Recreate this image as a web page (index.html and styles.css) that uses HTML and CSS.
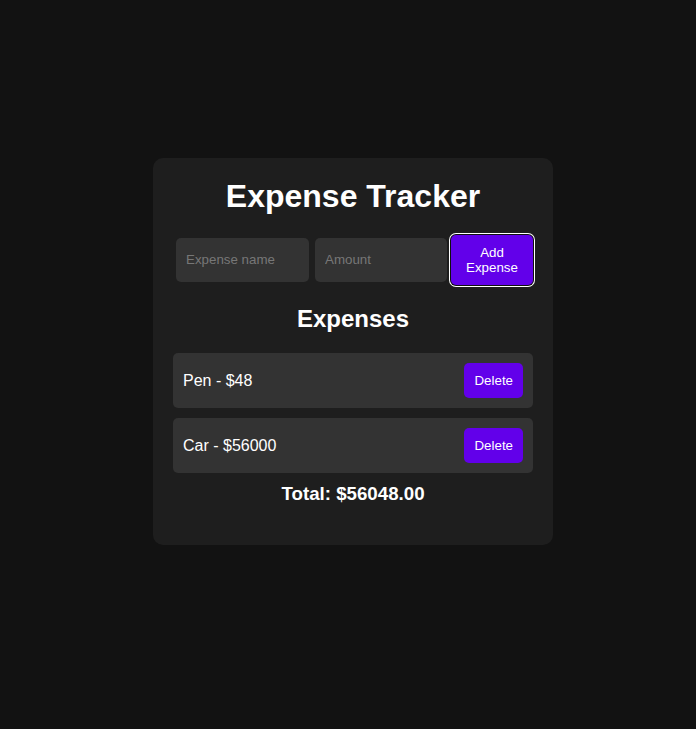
FILE: index.html
```html
<!DOCTYPE html>
<html>
<head>
<meta charset="utf-8">
<link rel="stylesheet" href="styles.css">
</head>
<body>
<div class="card">
  <h1 class="title">Expense Tracker</h1>
  <div class="form-row">
    <input class="field field-name" type="text" placeholder="Expense name">
    <input class="field field-amount" type="text" placeholder="Amount">
    <button class="add-btn">Add Expense</button>
  </div>
  <h2 class="subtitle">Expenses</h2>
  <ul class="list">
    <li class="item"><span class="item-text">Pen - $48</span><button class="del-btn">Delete</button></li>
    <li class="item"><span class="item-text">Car - $56000</span><button class="del-btn">Delete</button></li>
  </ul>
  <h3 class="total">Total: $56048.00</h3>
</div>
</body>
</html>
```

FILE: styles.css
```css
html, body {
  margin: 0;
  padding: 0;
  background: #121212;
  font-family: "Liberation Sans", Arial, sans-serif;
  color: #fff;
}
body {
  display: flex;
  justify-content: flex-start;
  padding: 158px 0 0 153px;
  height: 729px;
  box-sizing: border-box;
}
.card {
  width: 400px;
  box-sizing: border-box;
  background: #1e1e1e;
  border-radius: 10px;
  padding: 20px 20px 20px;
  align-self: flex-start;
}
.title {
  margin: 0 0 20px;
  font-size: 32px;
  font-weight: bold;
  text-align: center;
  line-height: 37px;
}
.form-row {
  display: flex;
  align-items: center;
  height: 50px;
}
.field {
  height: 44px;
  box-sizing: border-box;
  background: #333;
  border: none;
  border-radius: 5px;
  padding: 0 10px 2px;
  color: #fff;
  font-family: "Liberation Sans", Arial, sans-serif;
  font-size: 13.33px;
  outline: none;
}
.field::placeholder {
  color: #777;
}
.field-name {
  width: 133px;
  margin-left: 3px;
}
.field-amount {
  width: 132px;
  margin-left: 6px;
}
.add-btn {
  width: 82px;
  height: 50px;
  margin-left: 4px;
  background: #6200ea;
  color: #fff;
  border: none;
  border-radius: 5px;
  font-family: "Liberation Sans", Arial, sans-serif;
  font-size: 13.33px;
  line-height: 15px;
  padding: 0 10px;
  box-shadow: 0 0 0 1px #101010, 0 0 0 2px #fff;
}
.subtitle {
  margin: 20px 0 20px;
  font-size: 24px;
  font-weight: bold;
  text-align: center;
  line-height: 28px;
}
.list {
  list-style: none;
  margin: 0;
  padding: 0;
}
.item {
  display: flex;
  align-items: center;
  justify-content: space-between;
  height: 55px;
  box-sizing: border-box;
  padding: 0 10px;
  background: #333;
  border-radius: 5px;
  margin-bottom: 10px;
}
.item-text {
  font-size: 16px;
}
.del-btn {
  height: 35px;
  padding: 0 10px;
  background: #6200ea;
  color: #fff;
  border: none;
  border-radius: 5px;
  font-family: "Liberation Sans", Arial, sans-serif;
  font-size: 13.33px;
}
.total {
  margin: 0 0 20px;
  font-size: 18.72px;
  font-weight: bold;
  text-align: center;
  line-height: 22px;
}
```
